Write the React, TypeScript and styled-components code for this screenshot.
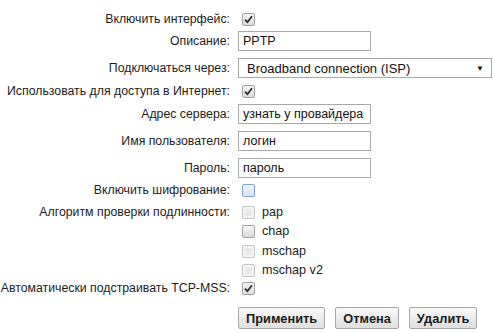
import React from "react";
import styled, { createGlobalStyle, css } from "styled-components";

const Global = createGlobalStyle`
  html, body { margin: 0; padding: 0; background: #ffffff; }
  body { font-family: "Liberation Sans", Arial, sans-serif; font-size: 12.3px; color: #1c1c1c; }
`;

const Form = styled.div`
  display: flex;
  flex-direction: column;
  width: 494px;
`;

const Row = styled.div<{ $h: number; $mt: number }>`
  display: grid;
  grid-template-columns: 230px 1fr;
  column-gap: 8px;
  align-items: center;
  height: ${(p) => p.$h}px;
  margin-top: ${(p) => p.$mt}px;
`;

const Label = styled.div`
  text-align: right;
  white-space: nowrap;
  line-height: 15px;
`;

const Value = styled.div`
  display: flex;
  align-items: center;
  height: 100%;
`;

const TextInput = styled.input`
  box-sizing: border-box;
  width: 133px;
  height: 20px;
  border: 1px solid #a9a9a9;
  padding: 1px 4px;
  font-family: "Liberation Sans", Arial, sans-serif;
  font-size: 12.5px;
  color: #111;
  background: #fff;
  outline: none;
`;

const Select = styled.div`
  box-sizing: border-box;
  width: 254px;
  height: 20px;
  border: 1px solid #a9a9a9;
  padding: 0 7px 0 8px;
  display: flex;
  align-items: center;
  justify-content: space-between;
  font-size: 13px;
  color: #111;
  background: #fff;
`;

const Arrow = styled.span`
  font-size: 8px;
  color: #111;
`;

type BoxKind = "checked" | "plain" | "focus" | "dim";

const Box = styled.span<{ $kind: BoxKind }>`
  box-sizing: border-box;
  width: 13px;
  height: 13px;
  margin-left: 4px;
  border-radius: 2px;
  border: 1px solid #a3a3a3;
  background: linear-gradient(#f4f4f4, #dcdcdc);
  display: inline-flex;
  align-items: center;
  justify-content: center;
  flex: none;
  ${(p) =>
    p.$kind === "focus" &&
    css`
      border-color: #7fa3d8;
      background: linear-gradient(#eef3fb, #d8e1ee);
    `}
  ${(p) =>
    p.$kind === "dim" &&
    css`
      border-color: #c4c4c4;
      background: #e9e9e9;
      box-shadow: inset 0 0 0 2px #f5f5f5;
    `}
`;

const OptionText = styled.span`
  margin-left: 7px;
  line-height: 15px;
  font-size: 12.6px;
`;

const Buttons = styled.div`
  display: flex;
  gap: 10px;
  height: 100%;
`;

const Button = styled.button`
  box-sizing: border-box;
  height: 22px;
  padding: 0 7px;
  border: 1px solid #a6a6a6;
  border-radius: 2px;
  background: linear-gradient(#fafafa, #dedede);
  font-family: "Liberation Sans", Arial, sans-serif;
  font-weight: bold;
  font-size: 12.8px;
  color: #1c1c1c;
`;

const Check = () => (
  <svg width="9" height="9" viewBox="0 0 9 9">
    <path d="M1 4.6 L3.4 7.2 L8 1.2" stroke="#2b2b2b" strokeWidth="1.8" fill="none" />
  </svg>
);

const CheckBox = ({ kind }: { kind: BoxKind }) => (
  <Box $kind={kind}>{kind === "checked" ? <Check /> : null}</Box>
);

export default function App() {
  return (
    <>
      <Global />
      <Form>
        <Row $h={13} $mt={12}>
          <Label>Включить интерфейс:</Label>
          <Value><CheckBox kind="checked" /></Value>
        </Row>
        <Row $h={20} $mt={6}>
          <Label>Описание:</Label>
          <Value><TextInput defaultValue="PPTP" /></Value>
        </Row>
        <Row $h={20} $mt={7}>
          <Label>Подключаться через:</Label>
          <Value>
            <Select>
              <span>Broadband connection (ISP)</span>
              <Arrow>▼</Arrow>
            </Select>
          </Value>
        </Row>
        <Row $h={13} $mt={6}>
          <Label>Использовать для доступа в Интернет:</Label>
          <Value><CheckBox kind="checked" /></Value>
        </Row>
        <Row $h={20} $mt={7}>
          <Label>Адрес сервера:</Label>
          <Value><TextInput defaultValue="узнать у провайдера" /></Value>
        </Row>
        <Row $h={20} $mt={7}>
          <Label>Имя пользователя:</Label>
          <Value><TextInput defaultValue="логин" /></Value>
        </Row>
        <Row $h={20} $mt={7}>
          <Label>Пароль:</Label>
          <Value><TextInput defaultValue="пароль" /></Value>
        </Row>
        <Row $h={13} $mt={5}>
          <Label>Включить шифрование:</Label>
          <Value><CheckBox kind="focus" /></Value>
        </Row>
        <Row $h={13} $mt={9}>
          <Label>Алгоритм проверки подлинности:</Label>
          <Value><CheckBox kind="dim" /><OptionText>pap</OptionText></Value>
        </Row>
        <Row $h={13} $mt={6}>
          <Label />
          <Value><CheckBox kind="plain" /><OptionText>chap</OptionText></Value>
        </Row>
        <Row $h={13} $mt={7}>
          <Label />
          <Value><CheckBox kind="dim" /><OptionText>mschap</OptionText></Value>
        </Row>
        <Row $h={13} $mt={6}>
          <Label />
          <Value><CheckBox kind="dim" /><OptionText>mschap v2</OptionText></Value>
        </Row>
        <Row $h={13} $mt={5}>
          <Label>Автоматически подстраивать TCP-MSS:</Label>
          <Value><CheckBox kind="checked" /></Value>
        </Row>
        <Row $h={22} $mt={13}>
          <Label />
          <Buttons>
            <Button>Применить</Button>
            <Button>Отмена</Button>
            <Button>Удалить</Button>
          </Buttons>
        </Row>
      </Form>
    </>
  );
}
